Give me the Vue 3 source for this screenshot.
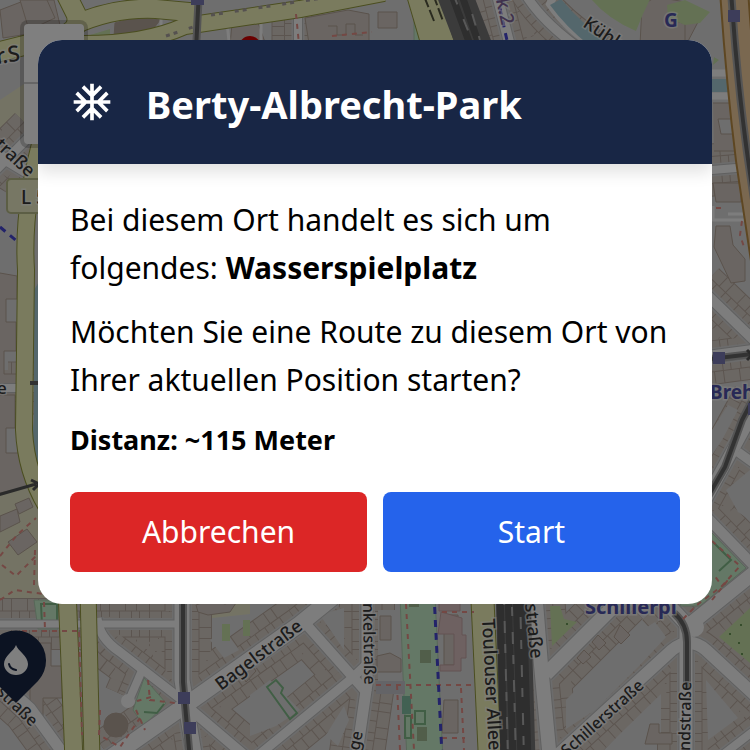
<script setup>
const roads = [
  { d: 'M-10 624H178', w: 8 },
  { d: 'M97 618Q99 638 120 652L182 700', w: 10 },
  { d: 'M143 668L130 698', w: 9 },
  { d: 'M182 590V680L195 760', w: 16 },
  { d: 'M110 758L190 702L300 624L332 598', w: 17 },
  { d: 'M305 623L368 694', w: 11 },
  { d: 'M255 758L350 680L367 664', w: 10 },
  { d: 'M367 590V684L356 760', w: 12 },
  { d: 'M190 709L250 760', w: 11 },
  { d: 'M-10 672L30 708L62 752', w: 12 },
  { d: 'M535 590L541 665L550 760', w: 15 },
  { d: 'M546 674L622 598', w: 15 },
  { d: 'M552 760L672 650Q690 636 706 650L760 700', w: 13 },
  { d: 'M664 600L688 626L760 568', w: 15 },
  { d: 'M686 622V760', w: 14 },
  { d: 'M716 760L760 726', w: 9 },
  { d: 'M700 288L760 346', w: 11 },
  { d: 'M700 358L760 350', w: 13 },
  { d: 'M760 400L700 510', w: 13 },
  { d: 'M738 452L770 475', w: 10 },
  { d: 'M700 510L758 570', w: 11 },
  { d: 'M700 171L748 167', w: 9 },
  { d: 'M524 -8Q545 28 600 62', w: 10 },
  { d: 'M34 132L-10 176', w: 10 },
  { d: 'M-10 150L40 180', w: 12 },
  { d: 'M-10 388H60', w: 9 },
  { d: 'M298 14V50', w: 9 },
  { d: 'M497 -5L511 50', w: 11 }
]
const yellowRoads = [
  { d: 'M64 -10L76 14Q82 32 54 38L-10 54', w: 19 },
  { d: 'M72 26Q112 7 156 9L200 13', w: 18 },
  { d: 'M84 44Q145 44 185 26L300 9L384 -7', w: 16 },
  { d: 'M44 130Q22 205 26 270L24 430Q26 475 50 512', w: 16 },
  { d: 'M67 590L74 760', w: 17 },
  { d: 'M88 590L92 760', w: 15 },
  { d: 'M422 -10L441 55', w: 32 },
  { d: 'M482 590L490 760', w: 22 }
]
const buildings = [
  'M0 10L26 0H54L60 25L34 33L3 38Z', 'M20 0H47L55 18L29 30Z',
  'M305 18L348 10L369 14V50H310Z', 'M328 26H337V35H346V24H355V35H363',
  'M378 12H397V28H378Z', 'M232 24L257 20L266 45H230Z',
  'M642 5L656 -3L686 2L698 22L686 45H640Z', 'M673 20L685 24V44',
  'M713 183H741V202H716Z', 'M716 226H730L733 245L745 259V281L731 283L714 247Z',
  'M713 103H733L737 119H718L721 134H741L744 151H714',
  'M0 273L17 276V299H6V322H16V351H4V374H17V397H0', 'M0 395H15V428H6V453H22L31 486L0 493',
  'M0 516L17 509L20 522L0 532Z', 'M8 542L27 529L37 542L18 555Z',
  'M15 504L29 498L33 507L19 514Z',
  'M6 643H51V666H62V698H43V718H30V687H11Z',
  'M380 616H391V640H380Z', 'M377 656L390 653L401 659V672H377Z',
  'M444 615H458V665H444Z', 'M444 700H458V733H442Z',
  'M650 724H659V733H672V744H645Z', 'M196 605L211 600L225 604L238 600L230 612L208 615L198 612Z',
  'M584 650L591 657L583 664L577 658Z', 'M598 635L606 643L599 650L592 642Z',
  'M620 625L630 635L621 644L614 637Z', 'M238 668L249 662L256 671L246 682Z'
]
const redPaths = [
  'M332 36L372 32', 'M296 14L299 44', 'M716 208H724', 'M742 221L740 235L745 250',
  'M0 556L17 535L36 518M2 565L16 576L36 556M35 550L34 585', 'M0 600L15 590L43 594',
  'M44 602L45 630M22 631H77', 'M79 632L82 735M100 710L99 735L120 747L140 718',
  'M148 680L150 700L175 703M136 710L145 730M151 697L137 701', 'M406 604L414 750', 'M376 685H474',
  'M442 612H474M397 685L400 750', 'M461 688L464 750M442 738H465', 'M712 541L740 566L722 586L714 575',
  'M683 619L697 605L726 583', 'M712 600L728 580'
]
const labels = [
  { t: 'r.S', x: -3, y: 64, r: -8, s: 22 },
  { t: 'traße', x: -6, y: 146, r: 43, s: 18 },
  { t: 'e', x: -3, y: 394, r: 0, s: 17 },
  { t: 'Kühlwetter', x: 582, y: 26, r: 34, s: 18 },
  { t: 'rk.2', x: 494, y: -8, r: 77, s: 19, c: 'violet' },
  { t: 'G', x: 664, y: 27, r: 0, s: 19, c: 'blue' },
  { t: 'Brehm', x: 710, y: 399, r: 0, s: 19, c: 'blue' },
  { t: 'Schillerpl', x: 585, y: 614, r: 0, s: 20, c: 'blue' },
  { t: 'Bagelstraße', x: 221, y: 691, r: -37, s: 18 },
  { t: 'nkelstraße', x: 363, y: 603, r: 89, s: 16 },
  { t: 'Toulouser Allee', x: 482, y: 619, r: 87, s: 18 },
  { t: 'straße', x: 525, y: 604, r: 84, s: 18 },
  { t: 'Schillerstraße', x: 567, y: 757, r: -42, s: 16 },
  { t: 'ndstraße', x: 690, y: 751, r: -89, s: 16 },
  { t: 'straße', x: -4, y: 693, r: 44, s: 16 },
  { t: 'age', x: 357, y: 760, r: -78, s: 16 }
]
</script>

<template>
  <div class="page">
    <svg class="map" viewBox="0 0 750 750" preserveAspectRatio="xMidYMid slice" aria-hidden="true">
      <rect class="land" width="750" height="750" />
      <path class="sand" d="M0 492L40 480L46 600H0ZM190 600H250V614L193 620ZM0 100L30 80V130L0 155Z" />
      <g class="lots">
        <path v-for="(r, i) in roads" :key="i" class="lot-edge" :d="r.d" :stroke-width="r.w + 44" />
        <path v-for="(r, i) in roads" :key="'f' + i" class="lot" :d="r.d" :stroke-width="r.w + 42" />
        <path v-for="(r, i) in roads" :key="'m' + i" class="lot-edge" :d="r.d" :stroke-width="r.w + 19" />
        <path v-for="(r, i) in roads" :key="'n' + i" class="lot near" :d="r.d" :stroke-width="r.w + 17" />
        <path v-for="(r, i) in roads" :key="'g' + i" class="yard" :d="r.d" :stroke-width="r.w + 4" />
      </g>
      <path class="land" d="M210 640L225 631L239 650L224 658ZM566 700L605 660L630 638L655 622L666 637L640 665L595 710L566 729ZM624 730L661 694V734L636 750H604ZM706 680L738 718L708 740ZM250 695L270 680L300 710L276 726L250 736ZM320 615L344 608V650ZM326 735L344 706L349 720L338 746ZM378 610H397V690H378Z" />
      <path class="land" d="M712 430L728 405L738 410L722 440L712 455ZM726 490L750 470V520L738 512ZM0 220L16 235V270H0ZM0 300L8 310V370H0Z" />
      <path v-for="(b, i) in buildings" :key="'b' + i" class="building" :d="b" />
      <path class="building dark" d="M115 23L136 17L160 20L151 32L114 37Z" />
      <circle class="building dark" cx="116" cy="725" r="12" />
      <path class="park" d="M34 600H58V629H38ZM144 678L166 703L144 726L133 710ZM400 596H435L443 760H407L403 675ZM712 533L746 568L700 606H680ZM414 13L422 42H414Z" />
      <path class="grass" d="M588 -5H652L643 14L636 31Q605 18 588 -5ZM667 5L685 0L710 12L700 23L685 25L668 18ZM714 57L719 60L713 65ZM550 606H560L564 619L577 622L552 646ZM222 624H230V641H222ZM243 620H250V636H243ZM750 608L719 637L750 663ZM90 35L110 29V35ZM357 680L363 675L364 687Z" />
      <path class="green-line" d="M267 687L276 680L283 688L281 693L297 713L290 719ZM405 716H411V738H405ZM415 711H425V724H415ZM713 542L731 560L719 571M144 712L157 713L164 704M41 604H57V625H42Z" />
      <path class="lawn" d="M420 650H431V663H420ZM417 727H427V741H417ZM409 599H419V607H409Z" />
      <path class="teal" d="M402 696H411V714H402Z" />
      <path class="pink" d="M441 612L462 618V635H466V658H461V671H440V665H454V634H438ZM439 603H460V611H439Z" />
      <path class="parking" d="M376 681H405V694H376Z" />
      <g class="roads">
        <path v-for="(r, i) in roads" :key="'c' + i" class="road-edge" :d="r.d" :stroke-width="r.w + 1" />
        <path v-for="(r, i) in roads" :key="'r' + i" class="road" :d="r.d" :stroke-width="r.w - 1" />
        <circle class="crossing" cx="694" cy="627" r="10" />
        <circle class="crossing" cx="128" cy="701" r="7" />
        <path class="road" d="M700 73H734M700 96H734" stroke-width="7" />
        <path class="road" d="M161 16V29H176M227 22L229 41M261 16V40M713 206V220H746V206M728 214H746" stroke-width="3" />
        <path class="bank" d="M553 -3L550 4Q570 33 596 46" stroke-width="8" />
        <path class="water" d="M550 5L561 -1Q580 22 612 46H590Q565 26 550 5ZM710 79H730V92H710ZM34 290L40 280V480Q29 455 34 420Z" />
        <path v-for="(r, i) in yellowRoads" :key="'y' + i" class="yellow-edge" :d="r.d" :stroke-width="r.w + 2" />
        <path v-for="(r, i) in yellowRoads" :key="'z' + i" class="yellow" :d="r.d" :stroke-width="r.w" />
      </g>
      <path class="arrows" d="M211 15L375 -10M166 36L205 23" />
      <path class="lane-arrows" d="M424 -4L434 21M433 -6L443 21" />
      <path class="rail-bed" d="M453 -10L476 50M513 590L518 760" />
      <path class="rails" d="M450 -10L472 50M460 -10L481 50M500 590L504 760M508 590L513 760M516 590L521 760M523 590L528 760" />
      <path class="sleepers" d="M454 -4L476 50M465 -10L480 40M504 596L508 760M512 607L516 760M520 592L524 760" />
      <path class="orange-edge" d="M734 -10Q740 80 750 160L768 280" />
      <path class="orange" d="M734 -10Q740 80 750 160L768 280" />
      <path class="tram-edge" d="M199 -10L196 50M183 590V682L190 760M760 386L742 420L725 467L706 500M710 359L760 353M674 613Q687 624 687 642V690M731 -10Q738 100 754 200" />
      <path class="tram" d="M199 -10L196 50M183 590V682L190 760M760 386L742 420L725 467L706 500M710 359L760 353M674 613Q687 624 687 642V690M731 -10Q738 100 754 200M30 383H42" />
      <path class="wire" d="M-2 495L36 484M31 480L39 484L33 490M747 350L752 355L747 360" />
      <path class="footways" v-for="(d, i) in redPaths" :key="'p' + i" :d="d" />
      <path class="cycle" d="M434 594L442 755M497 -5L508 45M0 227L18 242" />
      <path class="stop" d="M191 -8H204V5H191ZM728 10H740V22H728ZM713 352H725V364H713ZM748 403H760V415H748ZM178 692H190V704H178ZM184 722H196V734H184Z" />
      <path class="tree" d="M729 634H731M738 643H740M740 625H742M741 654H743M566 624H568" />
      <rect class="badge" x="7" y="179" width="70" height="34" rx="4" />
      <text class="label" x="21" y="204" font-size="19">L 55</text>
      <text
        v-for="(l, i) in labels" :key="'l' + i" class="label" :class="l.c"
        :font-size="l.s" :transform="`translate(${l.x} ${l.y}) rotate(${l.r})`"
      >{{ l.t }}</text>
      <circle class="red-pin" cx="250" cy="47" r="11" />
      <path class="pin" d="M16 703L-6 681A30 30 0 1 1 38 681Z" />
      <path class="drop" d="M16 645C14 651 4 656 4 664A12 11 0 0 0 28 664C28 656 18 651 16 645Z" />
      <path class="drop-line" d="M9 664Q10 669 16 670" />
      <rect class="zoom-frame" x="20" y="20" width="68" height="128" rx="8" />
      <rect class="zoom-box" x="24" y="24" width="60" height="120" rx="4" />
      <path class="zoom-split" d="M24 83H84" />
    </svg>
    <div class="overlay">
      <section class="dialog" role="dialog" aria-modal="true" aria-labelledby="place-title">
        <header class="head">
          <svg class="snow" viewBox="0 0 24 24" aria-hidden="true">
            <path d="M22 11h-4.17l3.24-3.24-1.41-1.42L15 11h-2V9l4.66-4.66-1.42-1.41L13 6.17V2h-2v4.17L7.76 2.93 6.34 4.34 11 9v2H9L4.34 6.34 2.93 7.76 6.17 11H2v2h4.17l-3.24 3.24 1.41 1.42L9 13h2v2l-4.66 4.66 1.42 1.41L11 17.83V22h2v-4.17l3.24 3.24 1.42-1.41L13 15v-2h2l4.66 4.66 1.41-1.42L17.83 13H22z" />
          </svg>
          <h1 id="place-title">Berty-Albrecht-Park</h1>
        </header>
        <div class="body">
          <p>Bei diesem Ort handelt es sich um folgendes: <strong>Wasserspielplatz</strong></p>
          <p>Möchten Sie eine Route zu diesem Ort von Ihrer aktuellen Position starten?</p>
          <p class="distance">Distanz: ~115 Meter</p>
          <div class="actions">
            <button type="button" class="cancel">Abbrechen</button>
            <button type="button" class="start">Start</button>
          </div>
        </div>
      </section>
    </div>
  </div>
</template>

<style>
body { margin: 0; }
</style>

<style scoped>
.page { min-height: 100vh; font-family: "Segoe UI", "Noto Sans", "Open Sans", sans-serif; color: #000; }
.map { position: fixed; inset: 0; width: 100%; height: 100%; }
.overlay { position: relative; box-sizing: border-box; min-height: 100vh; padding: 40px 38px; background: rgba(0, 0, 0, 0.5); }
.dialog { background: #fff; border-radius: 24px; overflow: hidden; }
.head { display: flex; align-items: center; gap: 32px; box-sizing: border-box; min-height: 124px; padding: 0 32px; background: #182645; color: #fff; box-shadow: 0 8px 16px rgba(0, 0, 0, 0.12); }
.snow { flex: none; width: 44px; height: 44px; fill: currentColor; }
h1 { margin: 0; padding-top: 4px; font-size: 38px; line-height: 48px; font-weight: 700; }
.body { padding: 32px; }
p { margin: 0 0 16px; font-size: 30px; line-height: 48px; }
.distance { font-size: 27px; line-height: 40px; font-weight: 700; margin-bottom: 32px; }
.actions { display: flex; gap: 16px; }
button { flex: 1; height: 80px; padding: 0; border: 0; border-radius: 8px; color: #fff; font-family: inherit; font-size: 30px; line-height: 48px; cursor: pointer; }
.cancel { background: #dc2626; }
.start { background: #2563eb; }

.land { fill: #dddddd; }
.sand { fill: #e9e7c8; }
.lots path, .roads path { fill: none; }
.lot-edge { stroke: #b9aba0; }
.lot { stroke: #d7cec7; stroke-dasharray: 12 1 8 1 15 1 10 1; }
.near { stroke-dasharray: 9 1 11 1 7 1; }
.yard { stroke: #d8d8d8; }
.building { fill: #d4cbc4; stroke: #b5a598; stroke-width: 1; }
.dark { fill: #b5a79b; }
.park { fill: #c8f0cc; stroke: #b0ceb2; }
.grass { fill: #c8e2a9; }
.green-line { fill: none; stroke: #82bd8b; stroke-width: 2; }
.lawn { fill: #a2bd94; }
.teal { fill: #85c3a6; }
.pink { fill: #ddc3c3; stroke: #c6a5a5; }
.roads .water { fill: #a9ced8; }
.bank { stroke: #fbfbfb; }
.parking { fill: #c8c8ce; }
.road-edge { stroke: #c0c0c0; stroke-linejoin: round; }
.road { stroke: #fbfbfb; stroke-linejoin: round; }
.crossing { fill: #fbfbfb; }
.yellow-edge { stroke: #969c40; }
.yellow { stroke: #f5f7bd; }
.arrows { fill: none; stroke: #aaa3a0; stroke-width: 3; stroke-dasharray: 4 4 4 12; }
.lane-arrows { fill: none; stroke: #55563f; stroke-width: 2; stroke-dasharray: 12 3; }
.rail-bed { fill: none; stroke: #777; stroke-width: 35; }
.rails { fill: none; stroke: #5c5c5c; stroke-width: 7; }
.sleepers { fill: none; stroke: #b0b0b0; stroke-width: 2; stroke-dasharray: 9 16 12 11; }
.orange-edge { fill: none; stroke: #bd8e45; stroke-width: 30; }
.orange { fill: none; stroke: #f5d0a1; stroke-width: 26; }
.tram-edge { fill: none; stroke: #aaa; stroke-width: 8; }
.tram { fill: none; stroke: #646464; stroke-width: 4; }
.wire { fill: none; stroke: #555; stroke-width: 3; }
.footways { fill: none; stroke: #e99088; stroke-width: 2; stroke-dasharray: 5 5; }
.cycle { fill: none; stroke: #4646d4; stroke-width: 3; stroke-dasharray: 7 6; }
.stop { fill: #7b7bb5; }
.tree { fill: none; stroke: #6c9b58; stroke-width: 2; }
.badge { fill: #eeefc8; stroke: #b9bc8a; stroke-width: 2; }
.label { fill: #383838; font-weight: 500; stroke: rgba(255, 255, 255, 0.6); stroke-width: 3px; paint-order: stroke; font-family: "Noto Sans", sans-serif; }
.blue { fill: #5053ac; font-weight: 700; }
.violet { fill: #80659b; }
.red-pin { fill: #d40000; }
.pin { fill: #182645; }
.drop { fill: #fff; }
.drop-line { fill: none; stroke: #182645; stroke-width: 2; stroke-linecap: round; }
.zoom-frame { fill: rgba(0, 0, 0, 0.2); }
.zoom-box { fill: #fff; }
.zoom-split { stroke: #ccc; stroke-width: 2; }
</style>
